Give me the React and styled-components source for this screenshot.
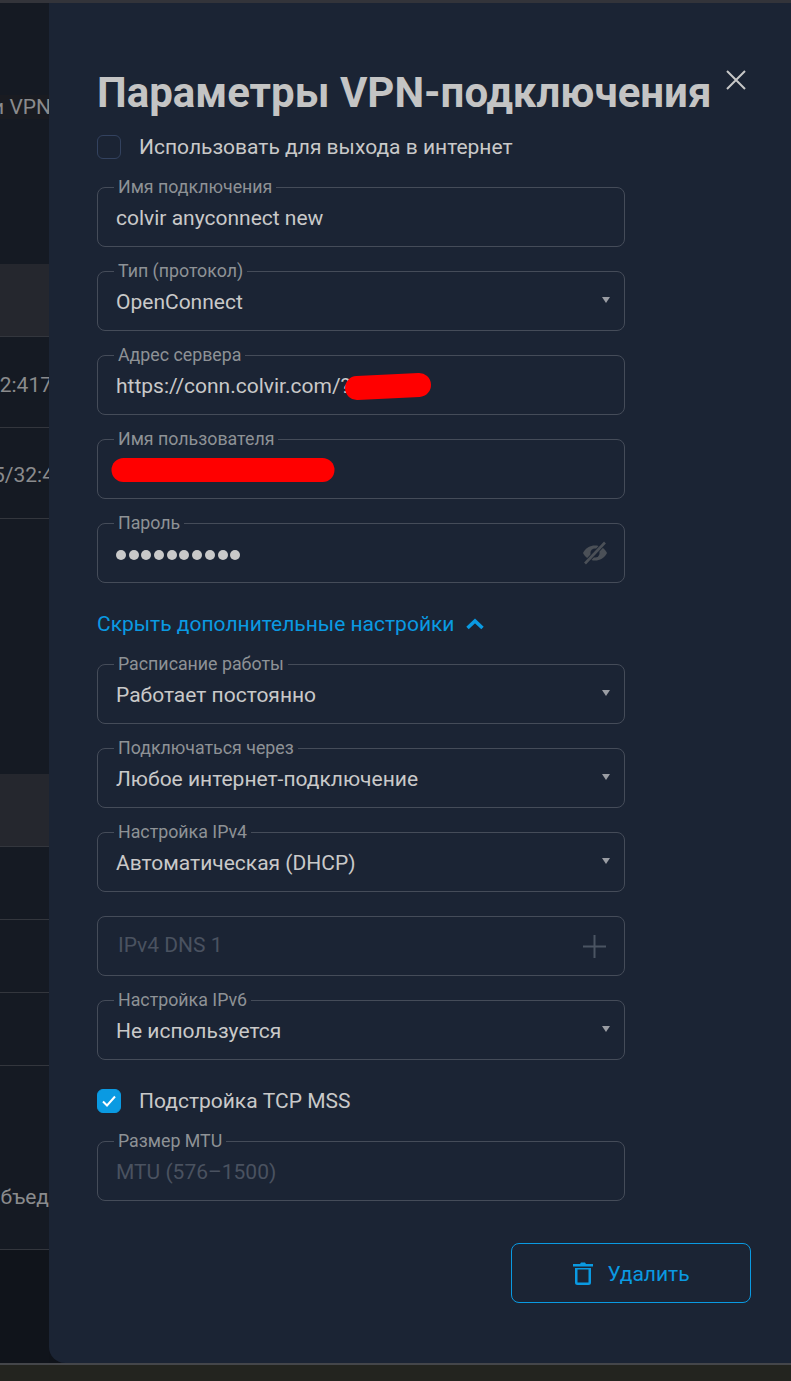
import styled, { createGlobalStyle } from "styled-components"
import { useState } from "react"

const Global = createGlobalStyle`
  html, body { margin: 0; padding: 0; background: #23241f; }
  #root { width: 791px; height: 1381px; overflow: hidden; }
`
const Screen = styled.div`
  width: 791px;
  height: 1381px;
  display: flex;
  flex-direction: column;
  font-family: Roboto, "Noto Sans", sans-serif;
  background: #23241f;
`
const TopEdge = styled.div`
  height: 3px;
  background: #33343a;
  flex: none;
`
const BottomEdge = styled.div`
  height: 2px;
  background: #44464a;
  flex: none;
`
const Stage = styled.div`
  flex: none;
  height: 1360px;
  display: flex;
  background: #0f131a;
`
const Behind = styled.div`
  width: 49px;
  flex: none;
  display: flex;
  flex-direction: column;
  overflow: hidden;
  background: #12161e;
`
const Row = styled.div`
  height: ${(p) => p.$h}px;
  flex: none;
  display: flex;
  align-items: center;
  justify-content: flex-end;
  white-space: nowrap;
  font-size: 21px;
  color: #8a8b8d;
  background: ${(p) => p.$bg || "#151a23"};
  border-bottom: ${(p) => (p.$line ? "1px solid #33363d" : "none")};
  padding-top: ${(p) => p.$pad || 0}px;
  box-sizing: border-box;
  overflow: hidden;
`
const RowText = styled.span`
  flex: none;
  margin-right: ${(p) => -p.$cut}px;
`
const Modal = styled.div`
  position: relative;
  flex: 1;
  background: #1b2434;
  border-bottom-left-radius: 16px;
  padding: 0 40px 0 48px;
  box-sizing: border-box;
`
const Title = styled.h1`
  margin: 0;
  padding-top: 64px;
  height: 120px;
  box-sizing: border-box;
  font-size: 42px;
  line-height: 52px;
  font-weight: 700;
  color: #c4c4c4;
  white-space: nowrap;
`
const Close = styled.button`
  position: absolute;
  top: 66px;
  left: 676px;
  width: 22px;
  height: 22px;
  padding: 0;
  border: 0;
  background: none;
  color: #c8c8c8;
`
const Check = styled.div`
  display: flex;
  align-items: center;
  height: 24px;
  gap: 18px;
  font-size: 21px;
  color: #c9c9c9;
  margin-top: ${(p) => p.$top || 0}px;
`
const Box = styled.span`
  width: 24px;
  height: 24px;
  border-radius: 6px;
  box-sizing: border-box;
  flex: none;
  display: flex;
  align-items: center;
  justify-content: center;
  border: 1px solid ${(p) => (p.$on ? "#0a9ae2" : "#33425f")};
  background: ${(p) => (p.$on ? "#0a9ae2" : "transparent")};
`
const Fields = styled.div`
  width: 528px;
  display: flex;
  flex-direction: column;
  gap: 24px;
  margin-top: ${(p) => p.$top}px;
`
const Field = styled.div`
  position: relative;
  height: 60px;
  box-sizing: border-box;
  border: 1px solid #454c59;
  border-radius: 8px;
  padding: 0 18px;
  display: flex;
  align-items: center;
  justify-content: space-between;
  font-size: 21px;
  color: #c9c9c9;
`
const Label = styled.label`
  position: absolute;
  top: -11px;
  left: 16px;
  padding: 0 4px;
  background: #1b2434;
  font-size: 17.8px;
  line-height: 20px;
  color: #8e9296;
  white-space: nowrap;
`
const Value = styled.span`
  position: relative;
  top: 1px;
  white-space: nowrap;
`
const Placeholder = styled(Value)`
  color: #4a5260;
  margin-left: ${(p) => p.$shift || 0}px;
  top: ${(p) => p.$lift || 1}px;
`
const Dots = styled(Value)`
  display: flex;
  gap: 2.7px;
  top: 2px;
`
const Dot = styled.i`
  width: 10px;
  height: 10px;
  border-radius: 50%;
  background: #c9c9c9;
`
const Caret = styled.span`
  width: 0;
  height: 0;
  border-left: 4.5px solid transparent;
  border-right: 4.5px solid transparent;
  border-top: 6px solid #9a9da3;
  margin-right: -4px;
  position: relative;
  top: -1px;
`
const Scribble = styled.svg`
  position: absolute;
  left: ${(p) => p.$left}px;
  top: ${(p) => p.$top}px;
`
const EyeSlot = styled.span`
  display: flex;
  margin-right: -2px;
  color: #4b5057;
`
const PlusSlot = styled.span`
  display: flex;
  color: #4b5462;
`
const Toggle = styled.div`
  display: flex;
  align-items: center;
  gap: 12px;
  height: 24px;
  margin-top: 29px;
  font-size: 21px;
  color: #0a9ae2;
`
const Footer = styled.div`
  display: flex;
  justify-content: flex-end;
  margin: 42px 0 0;
`
const Danger = styled.button`
  width: 240px;
  height: 60px;
  box-sizing: border-box;
  border: 1px solid #0a9ae2;
  border-radius: 8px;
  background: none;
  color: #0a9ae2;
  font: 21px Roboto, sans-serif;
  display: flex;
  align-items: center;
  justify-content: center;
  gap: 14px;
`
const DangerText = styled.span`
  position: relative;
  top: 1px;
  margin-right: -1px;
`

const rows = [
  { h: 92 },
  { h: 24, text: "и VPN", cut: 2, bg: "#191b21" },
  { h: 145 },
  { h: 73, bg: "#25272e", line: true },
  { h: 91, text: "2:417", cut: 3, pad: 6, line: true },
  { h: 91, text: "5/32:4", cut: 5, pad: 4, line: true },
  { h: 255 },
  { h: 73, bg: "#25272e", line: true },
  { h: 73, line: true },
  { h: 73, line: true },
  { h: 73, line: true },
  { h: 184, text: "бъед", cut: 0, pad: 78, line: true },
  { h: 115, bg: "#10141b" },
]

const Cross = () => (
  <svg width="22" height="22" viewBox="0 0 22 22" fill="none" stroke="currentColor" strokeWidth="2">
    <path d="M2 2L20 20M20 2L2 20" />
  </svg>
)

const Tick = () => (
  <svg width="16" height="14" viewBox="0 0 16 14" fill="none" stroke="#fff" strokeWidth="2">
    <path d="M2 7.5L6 11.5L14 2.5" />
  </svg>
)

const EyeOff = () => (
  <svg width="26" height="24" viewBox="0 0 26 24" fill="none">
    <path d="M1 12C4 6.5 8 4.5 13 4.5S22 6.5 25 12C22 17.5 18 19.5 13 19.5S4 17.5 1 12Z" fill="currentColor" />
    <circle cx="13" cy="12" r="4.6" fill="#1b2434" />
    <path d="M3 22.5L23 1.5" stroke="#1b2434" strokeWidth="4.5" />
    <path d="M3 22.5L23 1.5" stroke="currentColor" strokeWidth="2.6" />
  </svg>
)

const Plus = () => (
  <svg width="23" height="23" viewBox="0 0 23 23" stroke="currentColor" strokeWidth="2">
    <path d="M11.500 0V23M0 11.500H23" />
  </svg>
)

const Chevron = () => (
  <svg width="18" height="12" viewBox="0 0 18 12" fill="none" stroke="currentColor" strokeWidth="3.500">
    <path d="M1.500 10L9 3L16.500 10" />
  </svg>
)

const Trash = () => (
  <svg width="20" height="24" viewBox="0 0 20 24" fill="currentColor">
    <path d="M0 3H7L8 1.500H12L13 3H20V5.500H0Z" />
    <path d="M2 7H18V21.500Q18 24 15.500 24H4.500Q2 24 2 21.500ZM4.500 8.500V21.500H15.500V8.500Z" fillRule="evenodd" />
  </svg>
)

function SelectField({ label, value }) {
  return (
    <Field>
      <Label>{label}</Label>
      <Value>{value}</Value>
      <Caret />
    </Field>
  )
}

export default function App() {
  const [showExtra] = useState(true)
  return (
    <Screen>
      <Global />
      <TopEdge />
      <Stage>
        <Behind>
          {rows.map((r, i) => (
            <Row key={i} $h={r.h} $bg={r.bg} $line={r.line} $pad={r.pad}>
              {r.text && <RowText $cut={r.cut}>{r.text}</RowText>}
            </Row>
          ))}
        </Behind>
        <Modal>
          <Title>Параметры VPN-подключения</Title>
          <Close><Cross /></Close>
          <Check $top={12}><Box />Использовать для выхода в интернет</Check>
          <Fields $top={28}>
            <Field>
              <Label>Имя подключения</Label>
              <Value>colvir anyconnect new</Value>
            </Field>
            <SelectField label="Тип (протокол)" value="OpenConnect" />
            <Field>
              <Label>Адрес сервера</Label>
              <Value>https://conn.colvir.com/?</Value>
              <Scribble $left={246} $top={15} width="88" height="30" viewBox="0 0 88 30">
                <path d="M13 17L75 14" stroke="#f00" strokeWidth="24" strokeLinecap="round" fill="none" />
              </Scribble>
            </Field>
            <Field>
              <Label>Имя пользователя</Label>
              <Scribble $left={13} $top={18} width="224" height="24" viewBox="0 0 224 24">
                <rect x="0.500" y="0" width="223" height="24" rx="12" fill="#f00" />
              </Scribble>
            </Field>
            <Field>
              <Label>Пароль</Label>
              <Dots>{Array.from({ length: 10 }).map((_, i) => <Dot key={i} />)}</Dots>
              <EyeSlot><EyeOff /></EyeSlot>
            </Field>
          </Fields>
          {showExtra && (
            <>
              <Toggle>Скрыть дополнительные настройки <Chevron /></Toggle>
              <Fields $top={28}>
                <SelectField label="Расписание работы" value="Работает постоянно" />
                <SelectField label="Подключаться через" value="Любое интернет-подключение" />
                <SelectField label="Настройка IPv4" value="Автоматическая (DHCP)" />
                <Field>
                  <Placeholder $shift={2} $lift={-1}>IPv4 DNS 1</Placeholder>
                  <PlusSlot><Plus /></PlusSlot>
                </Field>
                <SelectField label="Настройка IPv6" value="Не используется" />
              </Fields>
              <Check $top={29}><Box $on><Tick /></Box>Подстройка TCP MSS</Check>
              <Fields $top={28}>
                <Field>
                  <Label>Размер MTU</Label>
                  <Placeholder>MTU (576–1500)</Placeholder>
                </Field>
              </Fields>
            </>
          )}
          <Footer>
            <Danger><Trash /><DangerText>Удалить</DangerText></Danger>
          </Footer>
        </Modal>
      </Stage>
      <BottomEdge />
    </Screen>
  )
}
